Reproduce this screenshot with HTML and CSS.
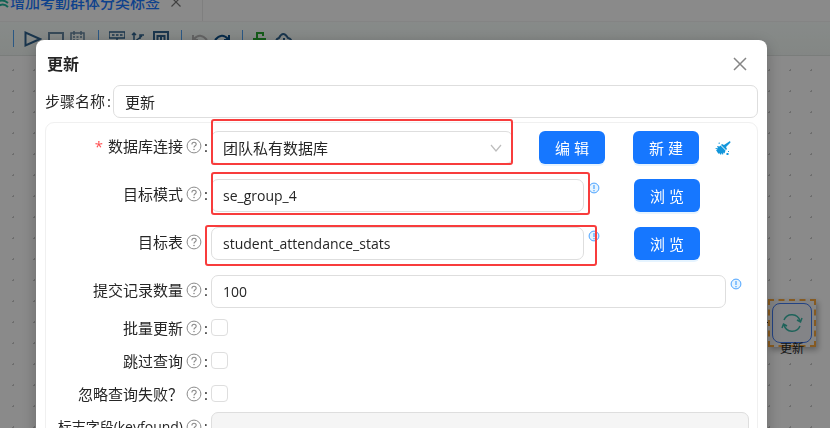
FILE: index.html
```html
<!DOCTYPE html>
<html lang="zh-CN">
<head>
<meta charset="utf-8">
<title>更新</title>
<link rel="stylesheet" href="styles.css">
</head>
<body>
<svg class="defs" aria-hidden="true">
  <symbol id="help" viewBox="0 0 16 16"><circle cx="8" cy="8" r="6.9" fill="none" stroke="currentColor"/><path d="M5.9 6.4C5.9 3.6 10.2 3.7 10.2 6.2C10.2 7.7 8 7.7 8 9.4" fill="none" stroke="currentColor" stroke-width="1.1"/><circle cx="8" cy="11.5" r=".8" fill="currentColor"/></symbol>
  <symbol id="info" viewBox="0 0 12 12"><circle cx="6" cy="6" r="4.9" fill="#e6f4ff" stroke="currentColor"/><path d="M6 3v4M6 8v1.2" stroke="currentColor" stroke-width="1.2"/></symbol>
</svg>
<div class="app">
  <header class="tabs">
    <div class="tab">
      <svg class="tab-icon" width="10" height="16" viewBox="0 0 10 16"><path d="M-3 5Q3 0 8 5M-4 9Q2 4 8 9M-3 13Q3 8 8 13" fill="none" stroke="#22b59b" stroke-width="2"/></svg>
      <span>增加考勤群体分类标签</span>
      <button class="tab-close" aria-label="关闭标签"><svg width="12" height="12" viewBox="0 0 12 12"><path d="M1.5 1.5l9 9M10.5 1.5l-9 9" stroke="#777" stroke-width="1.2"/></svg></button>
    </div>
  </header>
  <div class="toolbar">
    <i class="sep"></i>
    <svg width="18" height="18" viewBox="0 0 18 18"><path class="bold" d="M1.5 2.5v13L16 9z"/></svg>
    <svg class="light" width="16" height="18" viewBox="0 0 16 18"><path class="bold" d="M1 3h14v13H1z"/></svg>
    <svg class="light" width="16" height="18" viewBox="0 0 16 18"><path d="M1 3h13v13H1zM4 1v4M11 1v4M3 7h2M6.500 7h2M10 7h2M3 10h2M6.500 10h2"/></svg>
    <i class="sep"></i>
    <svg width="16" height="18" viewBox="0 0 16 18"><path d="M0 2h16v6H0zM3 5h2.500M7 5h2.500M11 5h2.500M8 8v8"/></svg>
    <svg width="16" height="18" viewBox="0 0 16 18"><path d="M3 17V3M1 5l2-2 2 2M3 12l8-6M9 9V5h4"/></svg>
    <svg width="16" height="18" viewBox="0 0 16 18"><path class="bold" d="M1 2h14v14H1zM4.500 13V6h7v7M8 6v7"/></svg>
    <i class="sep"></i>
    <svg class="undo" width="16" height="18" viewBox="0 0 16 18"><path class="bold" d="M1 5v5h5M2 9Q8 2 15 10"/></svg>
    <svg class="redo" width="16" height="18" viewBox="0 0 16 18"><path class="bold" d="M15 5v5h-5M14 9Q8 2 1 10"/></svg>
    <i class="sep"></i>
    <svg class="lock" width="16" height="18" viewBox="0 0 16 18"><path class="bold" d="M1 9h11v7H1zM4 9V3h6v3"/></svg>
    <svg width="18" height="18" viewBox="0 0 18 18"><path class="bold" d="M4 13Q0 12 2 9L4 8Q8 0 13 8Q17 9 16 12L14 13M9 8v8"/></svg>
  </div>
  <main class="canvas">
    <div class="node">
      <div class="node-frame"><div class="node-box">
        <svg width="22" height="22" viewBox="0 0 22 22"><path d="M3 8A8.500 8.500 0 0 1 19 9M16 8l3.500 2L21 6M19 14A8.500 8.500 0 0 1 3 13M1 16l1.500-4L6 14" fill="none" stroke="#38b5a5" stroke-width="1.500"/></svg>
      </div></div>
      <span class="node-label">更新</span>
    </div>
  </main>
</div>

<div class="mask">
  <section class="modal" role="dialog" aria-labelledby="title">
    <div class="modal-head">
      <h1 id="title">更新</h1>
      <button class="close" aria-label="关闭"><svg width="14" height="14" viewBox="0 0 14 14"><path d="M1 1l12 12M13 1L1 13" stroke="#858585" stroke-width="1.500"/></svg></button>
    </div>
    <div class="name-row">
      <label for="step">步骤名称<span class="colon">:</span></label>
      <input class="text" id="step" type="text" value="更新">
    </div>
    <form class="panel">
      <div class="row row-connection">
        <label for="conn"><span class="star">*</span>数据库连接<svg class="help"><use href="#help"/></svg><span class="colon">:</span></label>
        <div class="field">
          <select class="text" id="conn"><option>团队私有数据库</option></select>
          <svg class="arrow" width="12" height="8" viewBox="0 0 12 8"><path d="M1 1l5 6 5-6" fill="none" stroke="#bdbdbd" stroke-width="1.200"/></svg>
          <i class="mark mark-connection"></i>
        </div>
        <button class="btn" type="button">编 辑</button>
        <button class="btn btn-new" type="button">新 建</button>
        <svg class="broom" width="16" height="16" viewBox="0 0 16 16"><path d="M15 1l.5 1.500L11 7l1 2-1 1-5-5 1-1 2 1zM5.500 5.500l5 5-1 3-1-1-.5 2.500L6.500 13 6 15l-2-2-.500 1L1 10l1.500 0L0 8l3 .2L2 6l2.500.5zM3 3l2-.5L4.500 4zM11.500 13h2v2h-2zM13 11h1v1h-1z" fill="#1296db"/></svg>
      </div>
      <div class="row row-browse">
        <label for="schema">目标模式<svg class="help"><use href="#help"/></svg><span class="colon">:</span></label>
        <div class="field"><input class="text latin" id="schema" type="text" value="se_group_4"><i class="mark mark-schema"></i></div>
        <svg class="info"><use href="#info"/></svg>
        <button class="btn" type="button">浏 览</button>
      </div>
      <div class="row row-browse">
        <label for="table">目标表<svg class="help"><use href="#help"/></svg><span class="colon">:</span></label>
        <div class="field"><input class="text latin" id="table" type="text" value="student_attendance_stats"><i class="mark mark-table"></i></div>
        <svg class="info"><use href="#info"/></svg>
        <button class="btn" type="button">浏 览</button>
      </div>
      <div class="row row-count">
        <label for="count">提交记录数量<svg class="help"><use href="#help"/></svg><span class="colon">:</span></label>
        <div class="field"><input class="text latin" id="count" type="text" value="100"></div>
        <svg class="info"><use href="#info"/></svg>
      </div>
      <div class="row row-check">
        <label for="batch">批量更新<svg class="help"><use href="#help"/></svg><span class="colon">:</span></label>
        <input id="batch" type="checkbox">
      </div>
      <div class="row row-check">
        <label for="skip">跳过查询<svg class="help"><use href="#help"/></svg><span class="colon">:</span></label>
        <input id="skip" type="checkbox">
      </div>
      <div class="row row-check">
        <label for="ignore">忽略查询失败？<svg class="help"><use href="#help"/></svg><span class="colon">:</span></label>
        <input id="ignore" type="checkbox">
      </div>
      <div class="row row-key">
        <label class="latin" for="key">标志字段(keyfound)<svg class="help"><use href="#help"/></svg><span class="colon">:</span></label>
        <div class="field"><input class="text" id="key" type="text" disabled></div>
      </div>
    </form>
  </section>
</div>
</body>
</html>
```

FILE: styles.css
```css
* { box-sizing: border-box; }

html, body { height: 100%; }

body {
  margin: 0;
  overflow: hidden;
  color: #262626;
  font: 15px/20px "Open Sans", "Noto Sans CJK SC", sans-serif;
}

button, input, select { font: inherit; color: inherit; }

.defs { position: absolute; width: 0; height: 0; }

.app { display: flex; flex-direction: column; height: 100%; background: #fcfcfc; }

.tabs { display: flex; height: 22px; overflow: hidden; border-bottom: 1px solid #f0f0f0; }

.tab {
  display: flex;
  align-items: center;
  height: 22px;
  padding: 0 20px 18px 0;
  border-right: 1px solid #e8e8e8;
  color: #1b78ff;
  font-weight: 500;
  white-space: nowrap;
}

.tab-icon { flex: none; }

.tab-close { display: flex; margin-left: 10px; padding: 0; border: 0; background: none; }

.toolbar {
  display: flex;
  flex: none;
  gap: 6px;
  height: 34px;
  padding: 8px 13px;
  border-bottom: 1px solid #dfe3e1;
  background: linear-gradient(#f6fcf9, #eff5f2);
}

.toolbar svg { flex: none; fill: none; stroke: #2f618c; stroke-width: 1.5; }
.toolbar .bold { stroke-width: 2; }
.toolbar .light { stroke: #6585a0; }
.toolbar .undo { stroke: #b5b5b5; }
.toolbar .redo { stroke: #0b4d86; }
.toolbar .lock { stroke: #26a52e; }

.sep { flex: none; width: 1px; height: 17px; margin: 0 4px 0 6px; background: #4fa0f0; }
.sep:first-child { margin-left: 0; }

.canvas {
  position: relative;
  flex: 1;
  background:
    radial-gradient(circle, #c8c8c8 1px, transparent 1px) 3px 4px / 21px 21px,
    #fcfcfc;
}

.node { position: absolute; top: 243px; right: 14px; width: 48px; text-align: center; }
.node::before { content: ""; position: absolute; top: 23px; left: -6px; width: 10px; height: 1px; background: #333; }
.node-frame { position: relative; height: 48px; padding: 2px; border: 2px dashed #f5a53c; background: #eee; box-shadow: 2px 3px 6px rgba(0, 0, 0, 0.3); }
.node-box { display: flex; align-items: center; justify-content: center; height: 40px; border: 1px solid #3f78ee; border-radius: 8px; background: #eef0f6; }
.node-label { position: absolute; top: 40px; left: 12px; font-size: 12px; }

.mask {
  position: fixed;
  inset: 0;
  overflow: hidden;
  padding: 40px 63px 0 36px;
  background: rgba(0, 0, 0, 0.45);
}

.modal {
  padding: 0 9px 24px;
  border-radius: 8px;
  background: #fff;
  box-shadow: 0 4px 16px rgba(0, 0, 0, 0.25);
}

.modal-head { display: flex; align-items: center; justify-content: space-between; height: 45px; padding: 2px 11px 0 2px; }
.modal-head h1 { margin: 0; font-size: 16px; line-height: 24px; }

.close { display: flex; padding: 0; border: 0; background: none; }

.name-row { display: flex; align-items: center; }
.name-row label { width: 68px; padding-bottom: 2px; white-space: nowrap; }
.name-row .text { flex: 1; }

.colon { margin-left: 2px; }

.text {
  display: block;
  width: 100%;
  min-width: 0;
  height: 33px;
  padding: 0 11px;
  border: 1px solid #dedede;
  border-radius: 7px;
  background: #fff;
}

.text:disabled { background: #f5f5f5; }

.latin { font-size: 14px; }

select.text { appearance: none; }

.panel { margin-top: 4px; padding: 8px 8px 12px 0; border: 1px solid #f0f0f0; border-radius: 9px; }

.row { display: flex; align-items: center; margin-bottom: 15px; }

.row label {
  display: flex;
  flex: none;
  align-items: center;
  justify-content: flex-end;
  width: 165px;
  padding: 0 3px 3px 0;
  white-space: nowrap;
}

.star { margin-right: 5px; color: #ff4d4f; }

.help { flex: none; width: 16px; height: 16px; margin-left: 3px; color: #8c8c8c; }
.help + .colon { width: 4px; margin-left: 2px; }

.field { position: relative; flex: 1; min-width: 0; }

.arrow { position: absolute; top: 13px; right: 11px; }

.mark { position: absolute; border: 2px solid #f83c3c; border-radius: 3px; pointer-events: none; }
.mark-connection { inset: -12px 0 -1px; }
.mark-schema { inset: -7px -6px -3px 0; }
.mark-table { inset: -2px -13px -6px -6px; }

.info { flex: none; align-self: flex-start; width: 12px; height: 12px; margin: 3px 0 0 4px; color: #4ba3ff; }

.btn {
  flex: none;
  width: 66px;
  height: 33px;
  padding: 0;
  border: 0;
  border-radius: 6px;
  background: #1677ff;
  box-shadow: 0 2px 0 rgba(5, 145, 255, 0.1);
  color: #fff;
}

.row-connection { padding-right: 18px; }
.row-connection .btn { margin-left: 26px; }
.row-connection .btn-new { margin-left: 28px; }
.broom { flex: none; margin-left: 16px; }

.row-browse { padding-right: 49px; }
.row-browse .btn { margin-left: 34px; }

.row-count { margin-bottom: 3px; padding-right: 7px; }

.row-check { height: 33px; margin-bottom: 0; }
.row-check label { padding-bottom: 0; }
.row-check input {
  width: 17px;
  height: 17px;
  margin: 0;
  border: 1px solid #dedede;
  border-radius: 4px;
  background: #fff;
  appearance: none;
}

.row-key { margin: 2px 0 0; }
```
